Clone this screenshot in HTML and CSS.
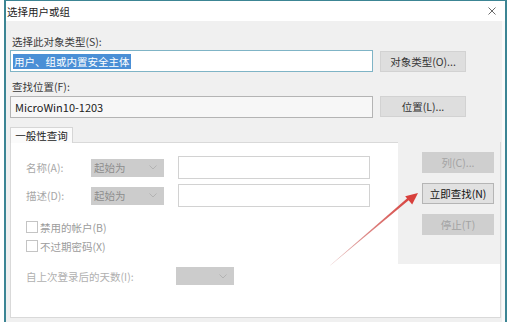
FILE: index.html
```html
<!DOCTYPE html>
<html lang="zh-CN">
<head>
    <meta charset="UTF-8">
    <title>选择用户或组</title>
    <link rel="stylesheet" href="styles.css">
</head>
<body>

    <div class="window">
        <!-- Title bar -->
        <div class="titlebar">
            <span class="title">选择用户或组</span>
            <svg class="close" width="8" height="8" viewBox="0 0 8 8">
                <path d="M0.5 0.5 L7.5 7.5 M7.5 0.5 L0.5 7.5" stroke="#6a6a6a" stroke-width="1" fill="none"/>
            </svg>
        </div>

        <div class="content">
            <div class="label">选择此对象类型(S):</div>
            <div class="row">
                <div class="field field-active"><span class="selected">用户、组或内置安全主体</span></div>
                <div class="btn">对象类型(O)...</div>
            </div>

            <div class="label label-gap">查找位置(F):</div>
            <div class="row">
                <div class="field field-readonly">MicroWin10-1203</div>
                <div class="btn">位置(L)...</div>
            </div>

            <!-- Tab control -->
            <div class="tabs">
                <div class="tab">一般性查询</div>
            </div>
            <div class="panel">
                <div class="panel-top">
                    <div class="query">
                        <div class="query-row">
                            <span class="q-label">名称(A):</span>
                            <div class="combo">起始为
                                <svg width="8" height="5" viewBox="0 0 8 5"><polyline points="0.5,0.5 4,4 7.5,0.5" fill="none" stroke="#b3b3b3" stroke-width="1"/></svg>
                            </div>
                            <div class="text-input"></div>
                        </div>
                        <div class="query-row row-second">
                            <span class="q-label">描述(D):</span>
                            <div class="combo">起始为
                                <svg width="8" height="5" viewBox="0 0 8 5"><polyline points="0.5,0.5 4,4 7.5,0.5" fill="none" stroke="#b3b3b3" stroke-width="1"/></svg>
                            </div>
                            <div class="text-input"></div>
                        </div>

                        <div class="check check-first"><span class="box"></span>禁用的帐户(B)</div>
                        <div class="check"><span class="box"></span>不过期密码(X)</div>

                        <div class="days-row">
                            <span class="days-label">自上次登录后的天数(I):</span>
                            <div class="combo combo-small">
                                <svg width="8" height="5" viewBox="0 0 8 5"><polyline points="0.5,0.5 4,4 7.5,0.5" fill="none" stroke="#b3b3b3" stroke-width="1"/></svg>
                            </div>
                        </div>
                    </div>

                    <div class="side">
                        <div class="side-btn disabled">列(C)...</div>
                        <div class="side-btn">立即查找(N)</div>
                        <div class="side-btn disabled">停止(T)</div>
                    </div>
                </div>
            </div>
        </div>
    </div>

    <!-- Red annotation arrow -->
    <svg class="arrow" width="510" height="322" viewBox="0 0 510 322">
        <defs>
            <linearGradient id="fade" x1="330" y1="265" x2="412" y2="198" gradientUnits="userSpaceOnUse">
                <stop offset="0" stop-color="#c9706e" stop-opacity="0.5"/>
                <stop offset="1" stop-color="#d8403c"/>
            </linearGradient>
        </defs>
        <polygon points="330,265.6 330.6,265.2 410.8,198.6 409.2,196.6" fill="url(#fade)"/>
        <polygon points="418,193 412.2,204.6 405.2,196.2" fill="#d8403c"/>
    </svg>

</body>
</html>
```

FILE: styles.css
```css
body {
    margin: 0;
    background-color: white;
    font-family: "Noto Sans CJK SC", "Noto Sans", sans-serif;
    font-size: 10.5px;
    color: #3a3a3a;
    position: relative;
    height: 322px;
    overflow: hidden;
}

/* Dialog frame */
.window {
    margin-left: 4px;
    width: 503px;
    height: 322px;
    box-sizing: border-box;
    border: 2px solid #3c8594;
    border-top: 1px solid #3c8594;
    border-bottom: none;
    background-color: #f0f0f0;
    overflow: hidden;
}

.titlebar {
    height: 20px;
    background-color: white;
    display: flex;
    align-items: center;
    justify-content: space-between;
    padding-left: 1px;
    padding-right: 9px;
}

.title {
    color: #222;
    font-size: 10.5px;
}

.content {
    padding: 13px 4px 0 4px;
    border-right: 3px solid #fafafa;
    height: 301px;
    box-sizing: border-box;
}

.label {
    line-height: 16px;
    padding-left: 2px;
}

.label-gap {
    margin-top: 7px;
}

.row {
    display: flex;
    align-items: flex-start;
    gap: 7px;
}

.field {
    width: 363px;
    height: 22px;
    box-sizing: border-box;
    display: flex;
    align-items: center;
    padding-left: 2px;
}

.field-active {
    background-color: white;
    border: 1px solid #7fb4c6;
}

.selected {
    background-color: #4a8fd6;
    color: white;
    line-height: 15px;
    padding: 0 1px;
}

.field-readonly {
    margin-top: 1px;
    background-color: #f7f7f7;
    border: 1px solid #b4b4b4;
    padding-left: 4px;
    color: #222;
    font-size: 11px;
}

.btn {
    width: 86px;
    height: 21px;
    margin-top: 1px;
    box-sizing: border-box;
    background-color: #dedede;
    border: 1px solid #d2d2d2;
    display: flex;
    align-items: center;
    justify-content: center;
    color: #333;
}

/* Tabs */
.tabs {
    margin-top: 9px;
    display: flex;
}

.tab {
    width: 63px;
    height: 16px;
    box-sizing: border-box;
    border: 1px solid #d6d6d6;
    border-bottom: none;
    background-color: #fbfbfb;
    display: flex;
    align-items: center;
    justify-content: center;
    color: #222;
    margin-bottom: -1px;
    position: relative;
}

.panel {
    width: 491px;
    height: 176px;
    box-sizing: border-box;
    border: 1px solid #d9d9d9;
    background-color: white;
}

.panel-top {
    display: flex;
    align-items: flex-start;
}

.query {
    width: 387px;
    box-sizing: border-box;
    padding: 13px 0 0 15px;
}

.query-row {
    display: flex;
    align-items: center;
    height: 23px;
}

.row-second {
    margin-top: 5px;
}

.q-label {
    width: 65px;
    color: #a8a8a8;
}

.combo {
    width: 73px;
    height: 18px;
    box-sizing: border-box;
    background-color: #cccccc;
    color: #8c8c8c;
    display: flex;
    align-items: center;
    justify-content: space-between;
    padding: 0 7px 0 3px;
}

.text-input {
    margin-left: 14px;
    width: 192px;
    height: 23px;
    box-sizing: border-box;
    border: 1px solid #d2d2d2;
    background-color: white;
}

.check {
    display: flex;
    align-items: center;
    height: 16px;
    margin-top: 3px;
    color: #9c9c9c;
}

.check-first {
    margin-top: 12px;
}

.box {
    width: 12px;
    height: 12px;
    box-sizing: border-box;
    border: 1px solid #c4c4c4;
    background-color: white;
    margin-right: 2px;
}

.days-row {
    display: flex;
    align-items: center;
    height: 18px;
    margin-top: 13px;
}

.days-label {
    width: 150px;
    color: #b0b0b0;
}

.combo-small {
    width: 58px;
    justify-content: flex-end;
}

/* Right hand buttons */
.side {
    width: 102px;
    height: 122px;
    box-sizing: border-box;
    margin-top: -1px;
    margin-right: -1px;
    background-color: #f0f0f0;
    padding: 10px 0 0 24px;
}

.side-btn {
    width: 72px;
    height: 21px;
    box-sizing: border-box;
    background-color: #e1e1e1;
    border: 1px solid #b5b5b5;
    display: flex;
    align-items: center;
    justify-content: center;
    color: #111;
    margin-bottom: 10px;
}

.side-btn.disabled {
    background-color: #cfcfcf;
    border-color: #cfcfcf;
    color: #a3a3a3;
}

.arrow {
    position: absolute;
    top: 0;
    left: 0;
    pointer-events: none;
}
```
